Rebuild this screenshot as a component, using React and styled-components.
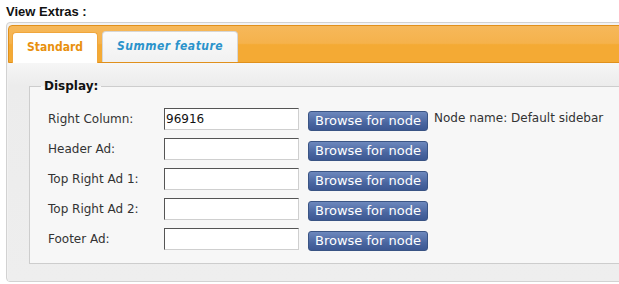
import styled, { createGlobalStyle } from 'styled-components';

const GlobalStyle = createGlobalStyle`
  html, body {
    margin: 0;
    padding: 0;
    background: #fff;
    overflow: hidden;
  }
`;

const rows = [
  { id: 'right', label: 'Right Column:', value: '96916', note: 'Node name: Default sidebar' },
  { id: 'header', label: 'Header Ad:', value: '' },
  { id: 'top1', label: 'Top Right Ad 1:', value: '' },
  { id: 'top2', label: 'Top Right Ad 2:', value: '' },
  { id: 'footer', label: 'Footer Ad:', value: '' },
];

const App = () => {
  return (
    <Page>
      <GlobalStyle />
      <Title>View Extras :</Title>
      <Panel>
        <TabBar>
          <Tab active>Standard</Tab>
          <Tab>Summer feature</Tab>
        </TabBar>
        <Body>
          <Fieldset>
            <Legend>Display:</Legend>
            <Grid>
              {rows.map(({ id, label, value, note }) => (
                <Row key={id}>
                  <Label>{label}</Label>
                  <Input defaultValue={value} />
                  <Btn>Browse for node</Btn>
                  {note && <Note>{note}</Note>}
                </Row>
              ))}
            </Grid>
          </Fieldset>
        </Body>
      </Panel>
    </Page>
  );
};

export default App;

const Page = styled.div`
  width: 619px;
  overflow: hidden;
  padding: 4px 0 0 6px;
  box-sizing: border-box;
  font-family: 'DejaVu Sans', Verdana, sans-serif;
`;

const Title = styled.div`
  font-family: 'Liberation Sans', Arial, sans-serif;
  font-weight: bold;
  font-size: 13px;
  line-height: 15px;
  color: #111;
  margin-bottom: 3px;
`;

const Panel = styled.div`
  margin-right: -8px;
  border: 1px solid #d2d2d2;
  border-radius: 4px;
  padding: 2px 0 0 1px;
  background: #f2f2f2;
`;

const TabBar = styled.div`
  height: 36px;
  display: flex;
  align-items: flex-end;
  gap: 4px;
  padding-left: 3px;
  border: 1px solid #e0901c;
  border-radius: 4px 0 0 0;
  background: linear-gradient(#f6b85a 0%, #f5b24c 48%, #f4aa34 52%, #f4aa34 100%);
`;

const Tab = styled.div`
  height: 31px;
  box-sizing: border-box;
  padding: 0 14px 2px;
  display: flex;
  align-items: center;
  font-family: 'DejaVu Sans Condensed', 'DejaVu Sans', sans-serif;
  font-size: 12px;
  font-weight: bold;
  letter-spacing: ${({ active }) => (active ? '0' : '0.5px')};
  font-style: ${({ active }) => (active ? 'normal' : 'italic')};
  color: ${({ active }) => (active ? '#e8900e' : '#2b93cb')};
  background: ${({ active }) => (active ? '#fff' : 'linear-gradient(#fbfbfb, #f1f1f1)')};
  border: 1px solid ${({ active }) => (active ? '#f0a63c' : '#d6d6d6')};
  border-bottom: none;
  border-radius: 4px 4px 0 0;
  margin-bottom: ${({ active }) => (active ? '-1px' : '0')};
`;

const Body = styled.div`
  padding: 16px 0 17px 21px;
  background: linear-gradient(#f6f6f6 0px, #ececec 22px, #eeeeee 100%);
`;

const Fieldset = styled.fieldset`
  margin: 0;
  padding: 14px 18px 13px;
  border: 1px solid #cdcdcd;
  background: #f7f7f7;
  min-width: 0;
`;

const Legend = styled.legend`
  font-family: 'DejaVu Sans', sans-serif;
  font-weight: bold;
  font-size: 12px;
  line-height: 15px;
  color: #111;
  padding: 0 3px;
  margin-left: -7px;
`;

const Grid = styled.div`
  display: flex;
  flex-direction: column;
  gap: 8px;
`;

const Row = styled.div`
  display: flex;
  align-items: center;
  height: 22px;
`;

const Label = styled.div`
  width: 116px;
  font-size: 12px;
  color: #333;
`;

const Input = styled.input`
  box-sizing: border-box;
  width: 135px;
  height: 22px;
  margin: 0 9px 0 0;
  padding: 1px 1px;
  font-family: 'DejaVu Sans', sans-serif;
  font-size: 12px;
  color: #111;
  background: #fff;
  border: 1px solid #cfcfcf;
  border-top-color: #555;
  border-left-color: #555;
  outline: none;
`;

const Btn = styled.button`
  box-sizing: border-box;
  width: 120px;
  height: 20px;
  margin: 4px 6px 0 0;
  padding: 0;
  font-family: 'DejaVu Sans', sans-serif;
  font-size: 13px;
  line-height: 18px;
  color: #fff;
  background: linear-gradient(#6d88bd, #4a66a0 60%, #3d5892);
  border: 1px solid #3a5484;
  border-radius: 3px;
`;

const Note = styled.div`
  font-size: 12px;
  color: #333;
  margin-top: -2px;
`;
